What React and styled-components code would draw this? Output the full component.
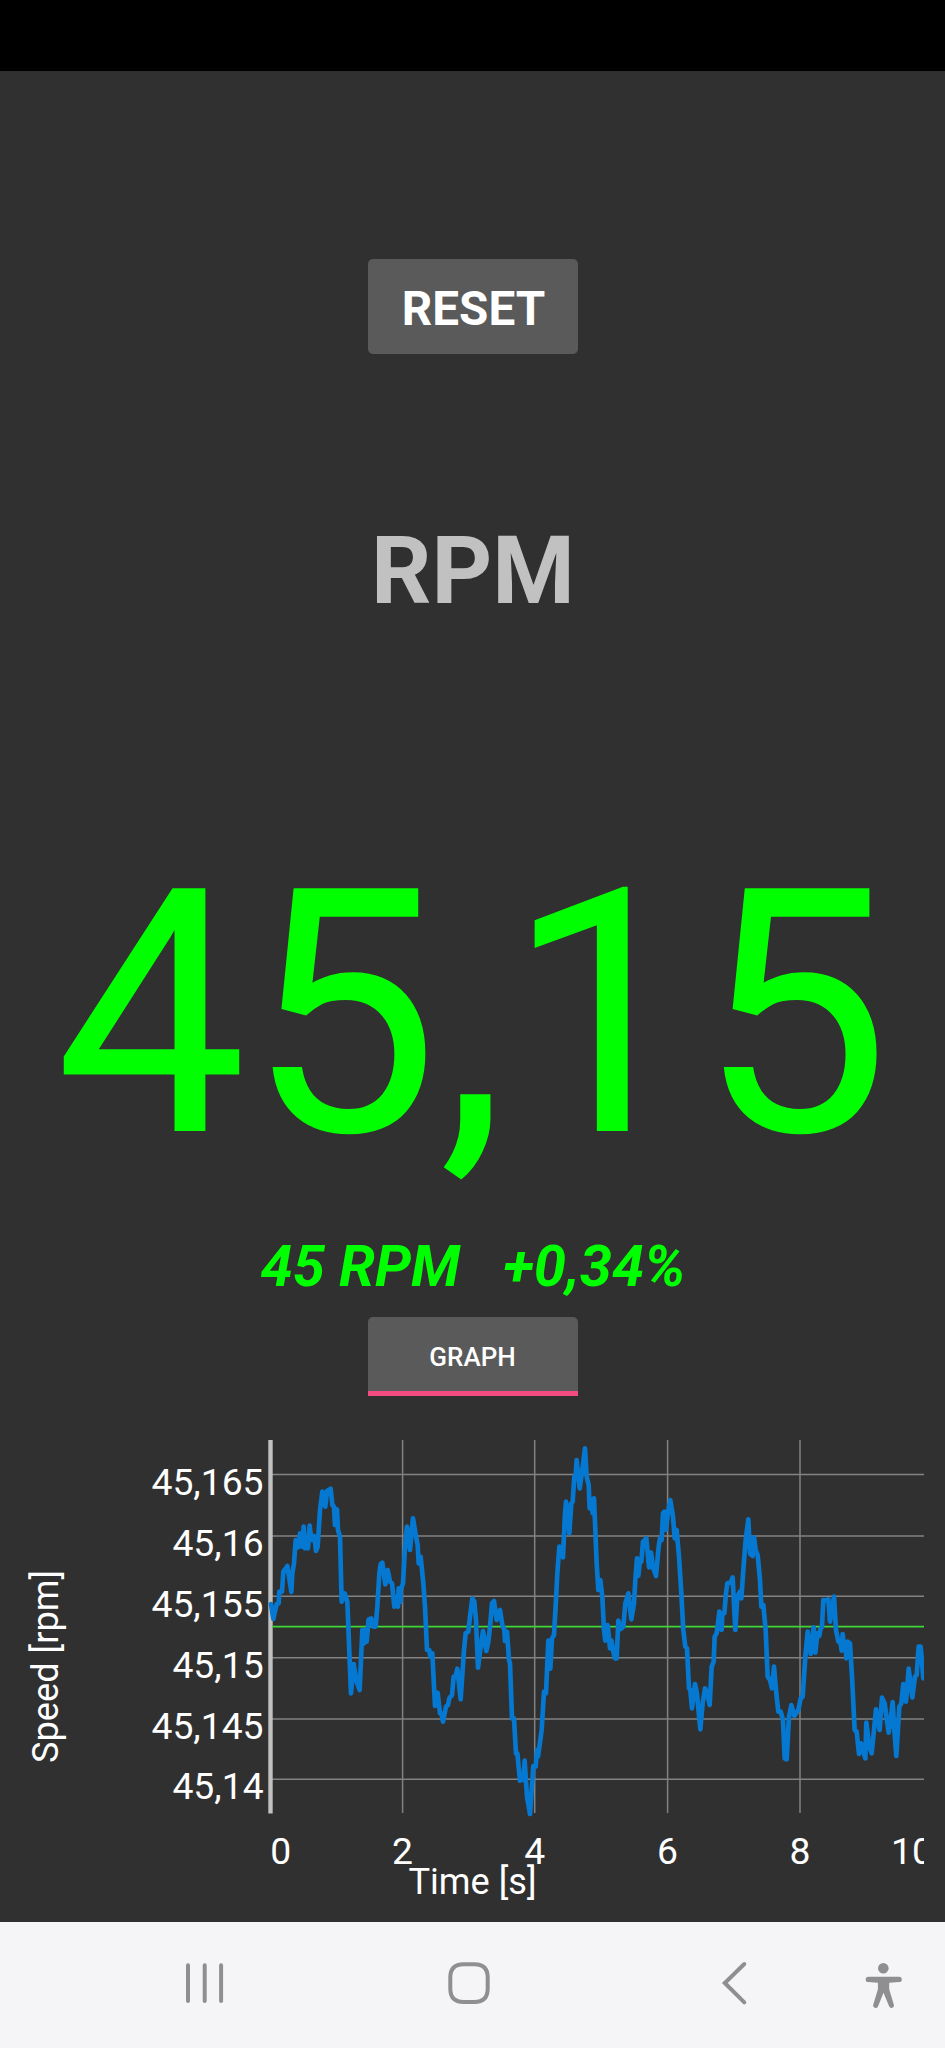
import React from 'react';
import styled, { createGlobalStyle } from 'styled-components';

const yTicks = [
  { label: '45,165', line: 78.5, base: 99 },
  { label: '45,16', line: 140, base: 160 },
  { label: '45,155', line: 200.3, base: 220.7 },
  { label: '45,15', line: 261.7, base: 281.7 },
  { label: '45,145', line: 323, base: 343 },
  { label: '45,14', line: 383.3, base: 403.3 },
];

const xTicks = [
  { label: '0', x: 280.8 },
  { label: '2', x: 402.6, line: true },
  { label: '4', x: 534.7, line: true },
  { label: '6', x: 667.6, line: true },
  { label: '8', x: 800, line: true },
  { label: '10', x: 912 },
];

// speed samples, three units per pixel
const samples = `33,522 40,567 50,522 56,520 58,485 66,485 70,425 82,408 94,486 97,430 102,400 107,330 114,352
120,310 126,350 131,290 135,355 140,320 144,355 149,287 154,330 163,318 168,363 173,350 180,240 187,185
196,230 201,183 212,176 217,225 222,230 225,285 231,238 234,300 240,320 245,515 254,490 262,515 265,590
273,790 281,702 290,755 299,780 307,600 312,640 316,600 320,635 326,568 334,565 340,590 347,590 352,530
358,430 362,402 367,398 376,463 383,420 390,455 396,460 403,530 410,500 414,530 416,475 422,515 422,480
429,460 435,350 441,290 450,360 459,265 468,320 473,345 476,400 482,380 490,460 495,530 501,660 508,660
511,680 517,670 525,828 533,788 540,850 544,850 549,875 558,830 564,825 568,805 576,795 581,740 587,738
592,716 602,808 612,660 617,610 625,605 630,560 637,505 643,515 648,570 654,713 660,665 669,603 679,663
685,635 690,590 696,520 702,513 710,570 720,540 727,585 733,600 735,633 741,605 747,690 750,700 756,865
762,865 768,970 772,970 780,1052 786,1030 790,1050 794,992 801,1100 810,1152 820,1008 827,1010 831,960
834,980 845,900 852,785 858,790 865,632 871,716 876,625 882,615 888,510 892,430 898,350 903,360 909,382
915,250 918,215 923,240 928,310 934,220 938,215 943,140 947,135 950,90 959,175 967,120 975,55 980,140
986,165 989,235 993,208 998,250 1002,205 1006,300 1010,400 1015,480 1021,450 1027,500 1032,600 1036,632
1043,585 1050,655 1054,632 1060,665 1065,685 1070,685 1075,572 1082,597 1090,590 1096,520 1105,490
1114,568 1122,520 1126,450 1131,385 1135,437 1140,390 1144,395 1149,335 1159,325 1167,412 1173,368
1179,412 1188,438 1196,350 1200,325 1205,330 1209,250 1213,245 1218,300 1225,240 1231,210 1239,260
1244,325 1250,300 1257,380 1264,490 1270,600 1276,650 1281,655 1287,775 1291,780 1296,835 1305,762
1311,792 1321,898 1328,820 1335,775 1342,790 1349,825 1355,710 1361,695 1364,620 1370,610 1374,580
1378,545 1385,600 1387,550 1393,550 1398,490 1402,460 1412,458 1418,442 1426,600 1432,500 1440,485
1444,505 1450,420 1457,330 1465,268 1470,370 1474,375 1478,378 1482,322 1487,360 1493,375 1500,450
1504,530 1510,525 1517,600 1523,740 1530,750 1536,775 1542,710 1550,800 1555,845 1562,845 1569,870
1574,985 1580,988 1587,860 1594,825 1603,858 1615,840 1622,805 1628,800 1636,680 1643,605 1652,672
1661,592 1666,668 1672,610 1678,618 1681,598 1686,590 1690,510 1695,512 1705,508 1710,575 1722,500
1728,600 1735,635 1741,635 1745,662 1748,612 1752,650 1756,640 1759,685 1763,635 1770,640 1776,740
1784,900 1790,905 1797,972 1803,940 1810,965 1816,985 1819,878 1828,950 1835,970 1842,900 1848,838
1859,900 1866,803 1874,820 1886,908 1892,870 1898,816 1903,900 1909,978 1918,830 1924,820 1930,762
1938,815 1946,716 1957,802 1965,740 1970,735 1976,650 1982,650 1990,745`;

function SpeedGraph() {
  return (
    <Graph viewBox='0 0 945 526'>
      <defs>
        <clipPath id='plot'>
          <rect x='268' y='30' width='656' height='470' />
        </clipPath>
      </defs>

      {yTicks.map((tick) => (
        <GridLine key={tick.label} x1='271' x2='924' y1={tick.line} y2={tick.line} />
      ))}
      {xTicks
        .filter((tick) => tick.line)
        .map((tick) => (
          <GridLine key={tick.label} x1={tick.x} x2={tick.x} y1='44' y2='417' />
        ))}
      <Axis x1='270.5' x2='270.5' y1='44' y2='417.5' />
      <Average x1='272' x2='924' y1='230.6' y2='230.6' />

      <g clipPath='url(#plot)'>
        <Trace points={samples} transform='translate(260 34) scale(0.33333)' />
        {xTicks.map((tick) => (
          <Label key={tick.label} x={tick.x} y='468' textAnchor='middle'>
            {tick.label}
          </Label>
        ))}
      </g>

      {yTicks.map((tick) => (
        <Label key={tick.label} x='263.6' y={tick.base} textAnchor='end'>
          {tick.label}
        </Label>
      ))}
      <AxisTitle x='472.5' y='498'>
        Time [s]
      </AxisTitle>
      <AxisTitle transform='translate(58 270.5) rotate(-90)'>Speed [rpm]</AxisTitle>
    </Graph>
  );
}

function App() {
  return (
    <Screen>
      <GlobalStyle />
      <StatusBar />
      <Content>
        <ResetButton>RESET</ResetButton>
        <Unit>RPM</Unit>
        <Speed>45,15</Speed>
        <Deviation>
          <span>45 RPM</span>
          <span>+0,34%</span>
        </Deviation>
        <GraphToggle>GRAPH</GraphToggle>
        <SpeedGraph />
      </Content>
      <NavBar viewBox='0 0 945 126'>
        {/* recents */}
        <NavStroke d='M188 43.3v35.6M204.7 43.3v35.6M221.1 43.3v35.6' />
        {/* home */}
        <NavStroke d='M463.5 42.3h11q13.2 0 13.2 13.2v11.2q0 13.2 -13.2 13.2h-11q-13.2 0 -13.2 -13.2v-11.2q0 -13.2 13.2 -13.2z' />
        {/* back */}
        <NavStroke d='M744.3 42L724.8 61l19.5 19.3' />
        {/* accessibility */}
        <g fill='#8f8f91'>
          <circle cx='883.3' cy='46.3' r='5.3' />
          <path d='M868.3 54.8h30.9a2.6 2.6 0 0 1 0 5.2l-10 .8v6.5l4.6 15.2a2.5 2.5 0 0 1-4.8 1.6l-5.5-13.4-5.3 13.4a2.5 2.5 0 0 1-4.9-1.6l4.6-15.2v-6.5l-9.6-.8a2.6 2.6 0 0 1 0-5.2z' />
        </g>
      </NavBar>
    </Screen>
  );
}

export default App;

const GlobalStyle = createGlobalStyle`
  body {
    margin: 0;
    background: #303030;
  }
`;

const Screen = styled.div`
  display: flex;
  flex-direction: column;
  width: 945px;
  height: 2048px;
  overflow: hidden;
  background: #303030;
  font-family: Roboto, sans-serif;
`;

const StatusBar = styled.div`
  flex: none;
  height: 71px;
  background: #000;
`;

const Content = styled.main`
  display: flex;
  flex: 1;
  flex-direction: column;
  align-items: center;
`;

const Button = styled.button`
  box-sizing: border-box;
  width: 210px;
  border: 0;
  background: #5a5a5b;
  color: #fff;
  font-family: inherit;
`;

const ResetButton = styled(Button)`
  height: 95px;
  margin-top: 188px;
  padding: 4px 0 0 2px;
  border-radius: 5px;
  font-size: 47.6px;
  font-weight: 700;
`;

const Unit = styled.div`
  margin-top: 162px;
  padding-left: 1px;
  color: #c1c1c1;
  font-size: 94.4px;
  font-weight: 700;
  line-height: 110px;
`;

const Speed = styled.div`
  margin-top: 188px;
  color: #00ff00;
  font-size: 341.6px;
  line-height: 400px;
`;

const Deviation = styled.div`
  display: flex;
  gap: 43px;
  margin-top: 18px;
  padding-left: 1px;
  color: #00ff00;
  font-size: 57.8px;
  font-style: italic;
  font-weight: 700;
  line-height: 68px;
`;

const GraphToggle = styled(Button)`
  height: 79px;
  margin-top: 17px;
  padding: 6px 0 0;
  border-bottom: 5px solid #f44b82;
  border-radius: 5px 5px 0 0;
  font-size: 26px;
  font-weight: 500;
`;

const Graph = styled.svg`
  flex: none;
  width: 945px;
  height: 526px;
`;

const GridLine = styled.line`
  stroke: #828282;
  stroke-width: 1.5;
`;

const Axis = styled.line`
  stroke: #c1c1c1;
  stroke-width: 4.4;
`;

const Average = styled.line`
  stroke: #3fd637;
  stroke-width: 1.8;
`;

const Trace = styled.polyline`
  fill: none;
  stroke: #0578d2;
  stroke-width: 14;
  stroke-linecap: round;
  stroke-linejoin: round;
`;

const Label = styled.text`
  fill: #fff;
  font-size: 37.3px;
`;

const AxisTitle = styled(Label)`
  font-size: 36.2px;
  text-anchor: middle;
`;

const NavBar = styled.svg`
  flex: none;
  width: 945px;
  height: 126px;
  background: #f5f5f8;
`;

const NavStroke = styled.path`
  fill: none;
  stroke: #8f8f91;
  stroke-width: 4;
  stroke-linecap: round;
`;
